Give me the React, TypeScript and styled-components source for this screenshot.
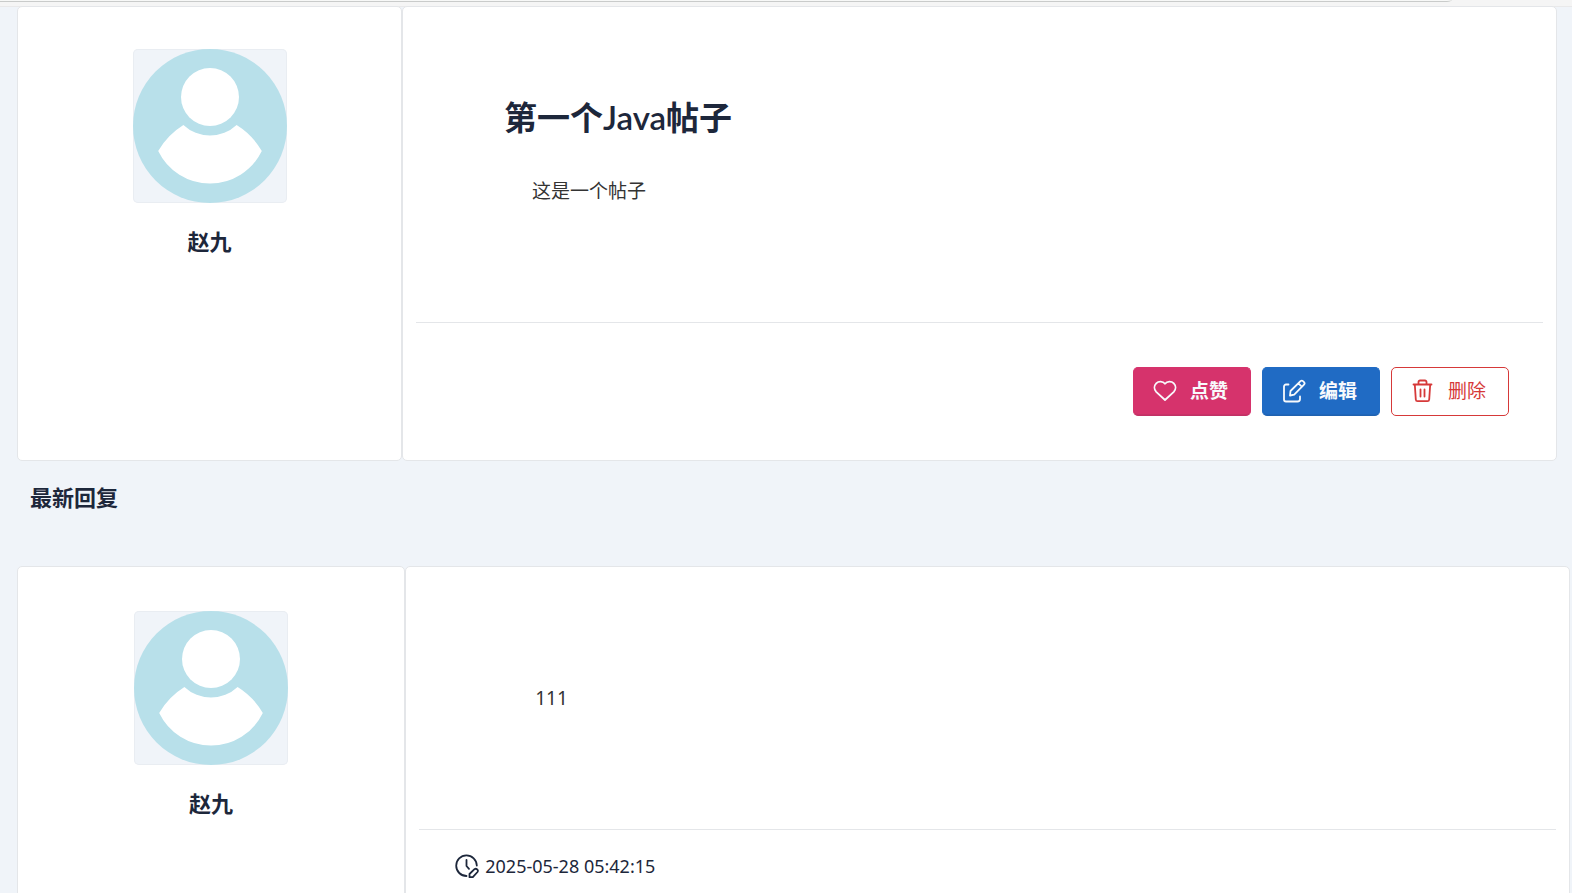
import React from "react";
import styled, { createGlobalStyle } from "styled-components";

const GlobalStyle = createGlobalStyle`
  *, *::before, *::after { box-sizing: border-box; }
  html, body { margin: 0; background: #f0f4f9; }
  body {
    color: #1d273b;
    font-family: "Noto Sans", "Noto Sans CJK SC", sans-serif;
    font-size: 19px;
    line-height: 28px;
  }
  h1, h2, h3, p { margin: 0; }
`;

const Page = styled.div`
  height: 100vh;
  overflow: hidden;
  display: flex;
  flex-direction: column;
`;

const TopBar = styled.header`
  flex: none;
  height: 7px;
  padding-right: 120px;
  background: #f5f5f5;
  border-bottom: 1px solid #e9e9ea;
`;

const AddressEdge = styled.div`
  height: 2px;
  background: #f7f8f7;
  border-bottom: 1px solid #c9cbca;
  border-bottom-right-radius: 8px 2px;
`;

const Main = styled.main`
  flex: none;
  padding-left: 17px;
`;

const PostRow = styled.article<{ $kind: "post" | "reply" }>`
  display: grid;
  grid-template-columns: minmax(0, 1fr) minmax(0, 3fr);
  min-height: ${(p) => (p.$kind === "post" ? 455 : 400)}px;
  margin-top: ${(p) => (p.$kind === "post" ? -1 : 0)}px;
  margin-right: ${(p) => (p.$kind === "post" ? 15 : 2)}px;
`;

const Card = styled.section`
  display: flex;
  flex-direction: column;
  background: #fff;
  border: 1px solid #e4e6e9;
  border-radius: 5px;
`;

const AuthorCard = styled(Card)<{ $top: number }>`
  align-items: center;
  padding-top: ${(p) => p.$top}px;
`;

const AvatarBox = styled.div`
  width: 154px;
  height: 154px;
  border-radius: 5px;
  overflow: hidden;
  background: #f0f4f9;
  box-shadow: 0 0 0 1px #e9edf2 inset;
  svg { display: block; width: 100%; height: 100%; }
`;

const AuthorName = styled.h3`
  margin-top: 23px;
  font-size: 22px;
  line-height: 30px;
  font-weight: 700;
`;

const BodyCard = styled(Card)`
  padding: 0 13px;
`;

const PostContent = styled.div`
  height: 315px;
  padding: 86px 88px 0;
`;

const Title = styled.h1`
  font-family: Lato, "Noto Sans CJK SC", sans-serif;
  font-size: 33px;
  line-height: 48px;
  font-weight: 600;
`;

const PostText = styled.p`
  margin-top: 36px;
  padding-left: 28px;
  color: #333;
`;

const ReplyContent = styled.div`
  height: 262px;
  padding: 117px 116px 0;
  color: #333;
`;

const Actions = styled.footer`
  display: flex;
  justify-content: flex-end;
  gap: 11px;
  padding: 44px 34px 0;
  border-top: 1px solid #e4e6e9;
`;

const Button = styled.button<{ $tone: "pink" | "blue" | "danger" }>`
  display: flex;
  align-items: center;
  gap: 13px;
  height: 49px;
  padding: 0 22px 2px 19px;
  border: 1px solid ${(p) => ({ pink: "#d6336c", blue: "#206bc4", danger: "#d63939" })[p.$tone]};
  border-bottom-color: ${(p) => ({ pink: "#c23165", blue: "#2062b0", danger: "#d63939" })[p.$tone]};
  border-radius: 5px;
  background: ${(p) => ({ pink: "#d6336c", blue: "#206bc4", danger: "#fff" })[p.$tone]};
  box-shadow: ${(p) => (p.$tone === "danger" ? "none" : "inset 0 -1px 0 0 rgba(24, 36, 51, 0.08)")};
  color: ${(p) => (p.$tone === "danger" ? "#d63939" : "#f8fafc")};
  font-family: inherit;
  font-size: 19px;
  line-height: 28px;
  font-weight: ${(p) => (p.$tone === "danger" ? 400 : 600)};
  white-space: nowrap;
  cursor: pointer;
`;

const Icon = styled.svg`
  flex: none;
  width: 24px;
  height: 24px;
  fill: none;
  stroke: currentColor;
  stroke-width: 1.8;
  stroke-linecap: round;
  stroke-linejoin: round;
`;

const SectionTitle = styled.h2`
  height: 105px;
  padding: 21px 13px 0;
  font-size: 22px;
  line-height: 30px;
  font-weight: 700;
`;

const ReplyMeta = styled.footer`
  display: flex;
  align-items: center;
  gap: 6px;
  padding: 22px 36px 0;
  border-top: 1px solid #e4e6e9;
  font-size: 18px;
`;

const Avatar = () => (
  <AvatarBox>
    <svg viewBox="0 0 154 154" role="img" aria-label="头像">
      <circle cx="77" cy="77" r="77" fill="#b8e0ea" />
      <circle cx="77" cy="48" r="29" fill="#fff" />
      <path
        d="M25.2 102A74 74 0 0 1 50.4 76A38.7 38.7 0 0 0 103.6 76A74 74 0 0 1 128.8 102A57.5 57.5 0 0 1 25.2 102Z"
        fill="#fff"
      />
    </svg>
  </AvatarBox>
);

const HeartIcon = () => (
  <Icon viewBox="0 0 24 24" aria-hidden="true">
    <path d="M12 4.800C9.800 2 5.400 2.200 3.200 4.400C.900 6.800.900 10.300 3.200 12.800L12 21L20.800 12.800C23.100 10.300 23.100 6.800 20.800 4.400C18.600 2.200 14.200 2 12 4.800Z" />
  </Icon>
);

const EditIcon = () => (
  <Icon viewBox="0 0 24 24" aria-hidden="true">
    <path d="M6.500 5.500H4A2 2 0 0 0 2 7.500V20.500A2 2 0 0 0 4 22.500H15.500A2.500 2.500 0 0 0 18 20V17.500" />
    <path d="M8 16.500L8.500 12L18.500 2.200A1.800 1.800 0 0 1 21 2.200L22 3.100A1.800 1.800 0 0 1 22 5.600L12.200 15.600ZM16.400 4.400L19.800 7.700" />
  </Icon>
);

const TrashIcon = () => (
  <Icon viewBox="0 0 24 24" aria-hidden="true">
    <path d="M2.500 5.500H20.500M7.500 5.500V3A1.500 1.500 0 0 1 9 1.500H14A1.500 1.500 0 0 1 15.500 3V5.500M3.800 5.500L4.800 20.500A1.800 1.800 0 0 0 6.600 22.200H16.400A1.800 1.800 0 0 0 18.200 20.500L19.200 5.500M9.500 10.500V17.500M13.500 10.500V17.500" />
  </Icon>
);

const ClockEditIcon = () => (
  <Icon viewBox="0 0 24 24" aria-hidden="true">
    <path d="M11.500 22A10.300 10.300 0 1 1 21.800 11.500M11.500 6V12L14 14.800" />
    <path d="M14.500 23.200V20L19.500 15.200Q20.800 14.300 22 15.300L22.400 15.700Q23.400 16.800 22.500 18L17.800 23.200Z" />
  </Icon>
);

interface AuthorProps {
  name: string;
  top: number;
}

const Author = ({ name, top }: AuthorProps) => (
  <AuthorCard $top={top}>
    <Avatar />
    <AuthorName>{name}</AuthorName>
  </AuthorCard>
);

export default function App() {
  return (
    <>
      <GlobalStyle />
      <Page>
        <TopBar>
          <AddressEdge />
        </TopBar>
        <Main>
          <PostRow $kind="post">
            <Author name="赵九" top={42} />
            <BodyCard>
              <PostContent>
                <Title>第一个Java帖子</Title>
                <PostText>这是一个帖子</PostText>
              </PostContent>
              <Actions>
                <Button type="button" $tone="pink">
                  <HeartIcon />
                  点赞
                </Button>
                <Button type="button" $tone="blue">
                  <EditIcon />
                  编辑
                </Button>
                <Button type="button" $tone="danger">
                  <TrashIcon />
                  删除
                </Button>
              </Actions>
            </BodyCard>
          </PostRow>
          <SectionTitle>最新回复</SectionTitle>
          <PostRow $kind="reply">
            <Author name="赵九" top={44} />
            <BodyCard>
              <ReplyContent>111</ReplyContent>
              <ReplyMeta>
                <ClockEditIcon />
                <time dateTime="2025-05-28T05:42:15">2025-05-28 05:42:15</time>
              </ReplyMeta>
            </BodyCard>
          </PostRow>
        </Main>
      </Page>
    </>
  );
}
